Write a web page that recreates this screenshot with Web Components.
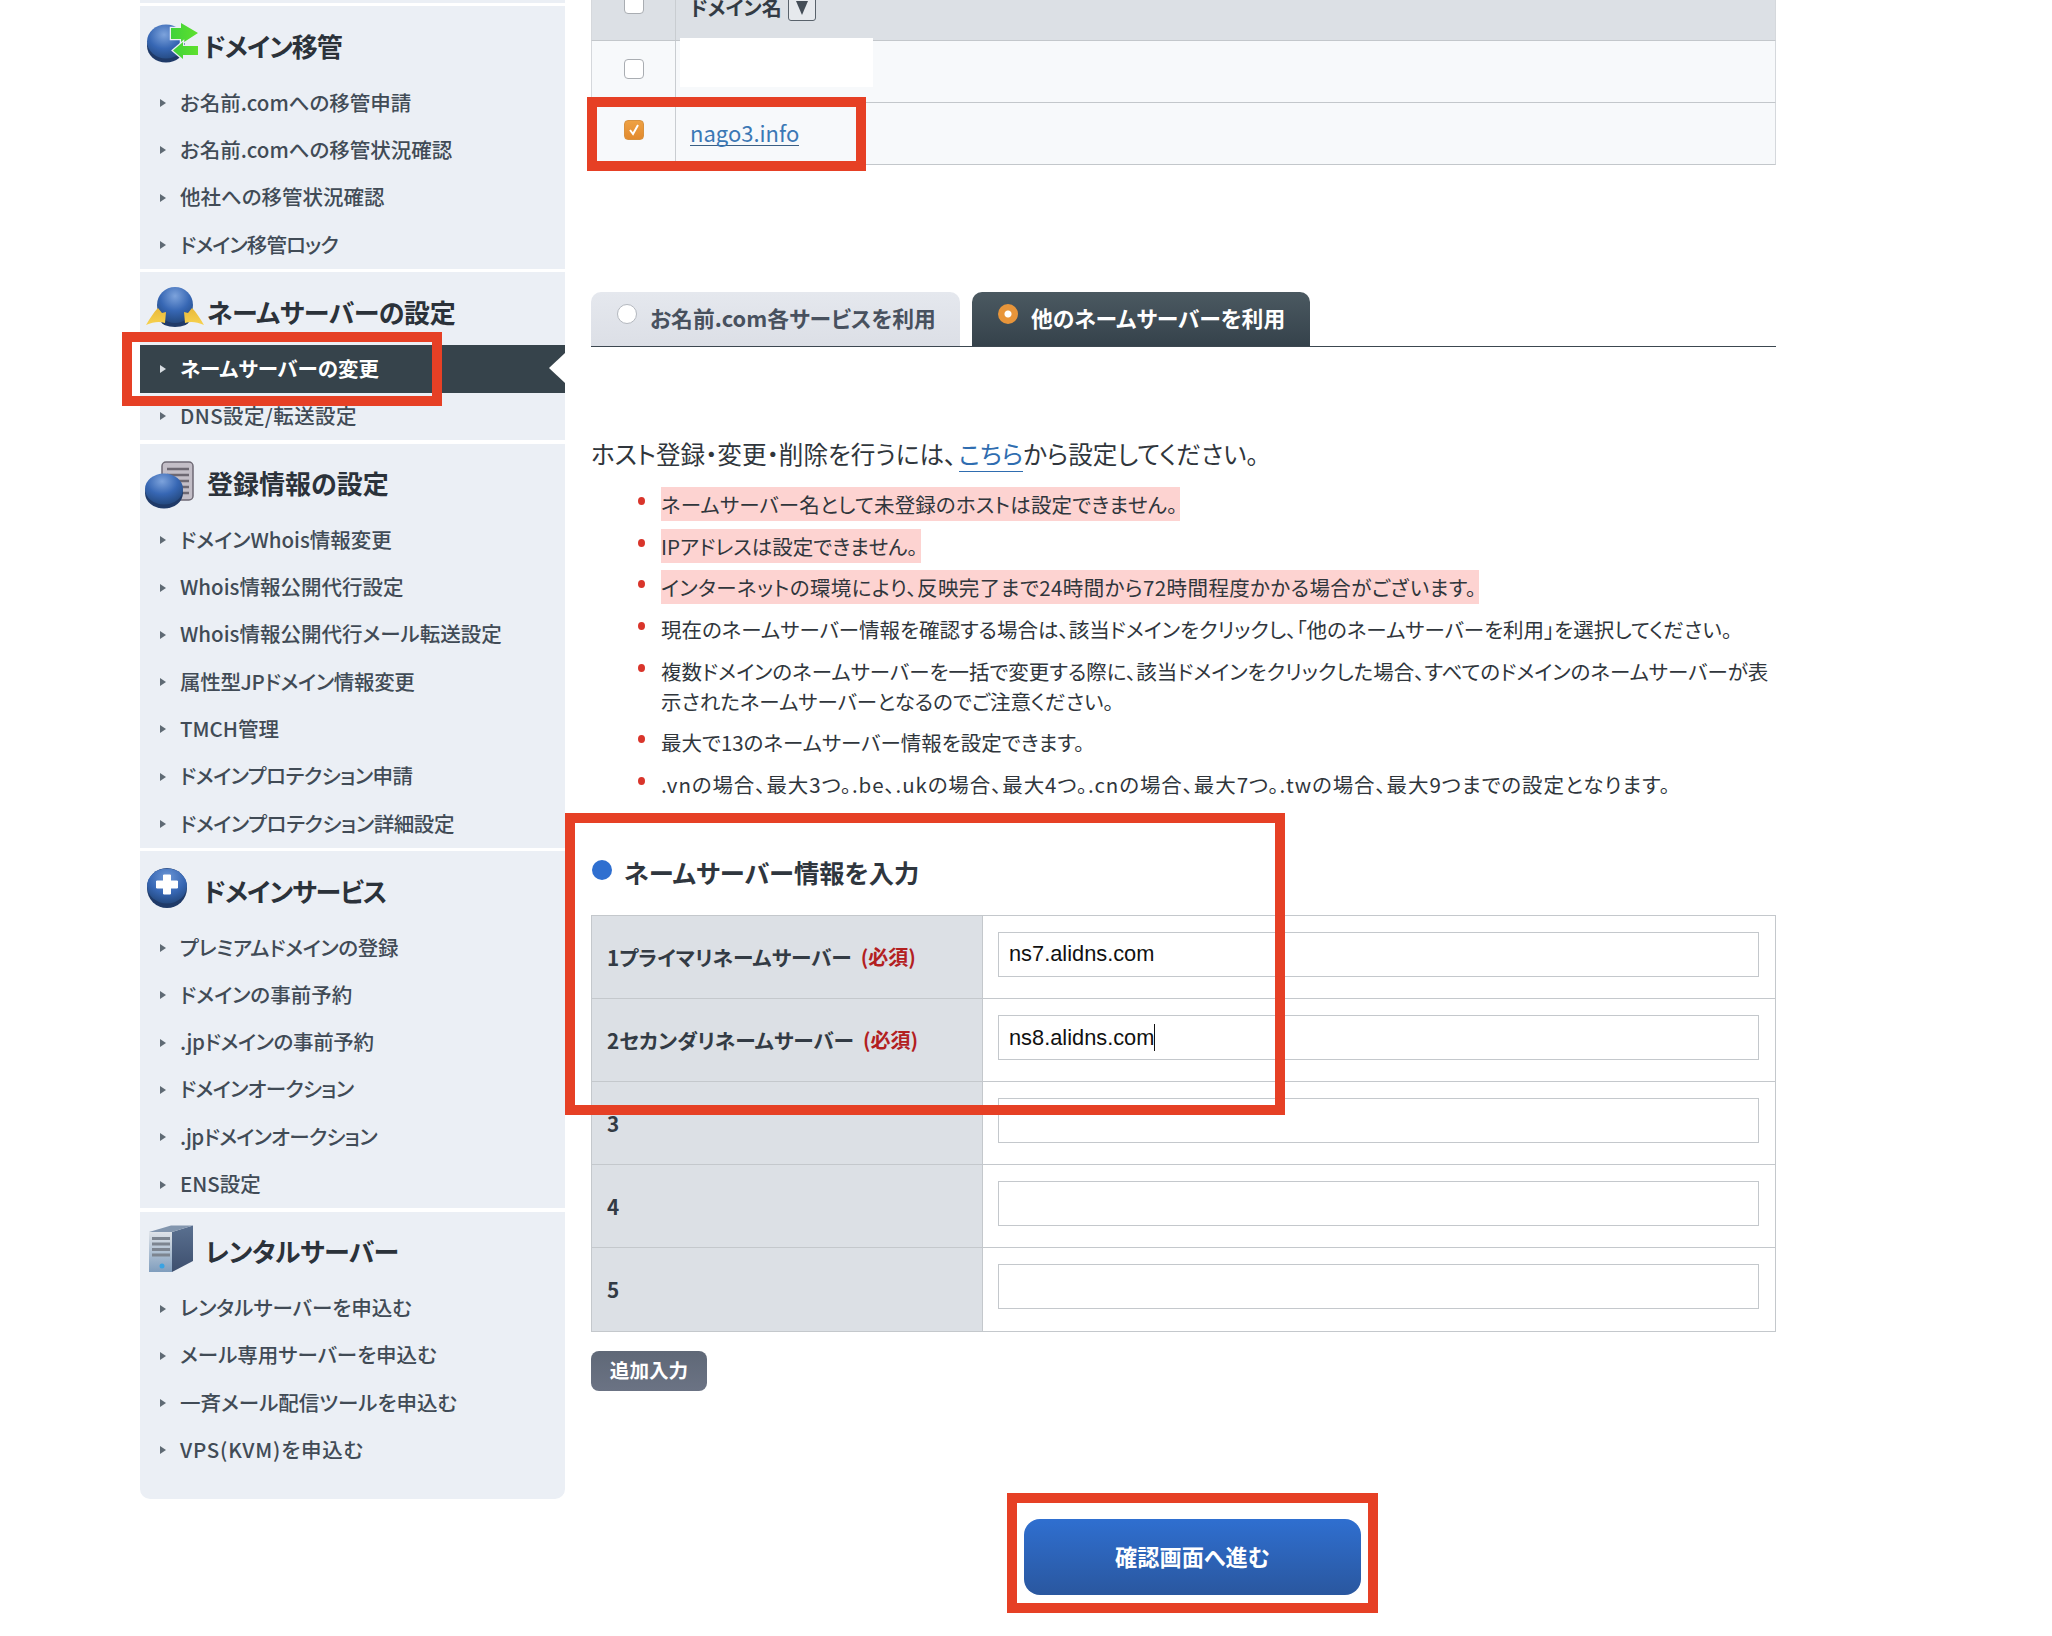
<!DOCTYPE html>
<html lang="ja">
<head>
<meta charset="utf-8">
<title>ネームサーバーの変更</title>
<style>
  html, body { margin: 0; padding: 0; background: #fff; }
  body {
    width: 2052px;
    height: 1636px;
    overflow: hidden;
    position: relative;
    font-family: "Noto Sans CJK JP", "Liberation Sans", sans-serif;
    color: #333;
  }
  svg { overflow: visible; }
</style>
</head>
<body>
<x-page>
  <x-sidebar slot="side">
    <x-nav-section heading="ドメイン移管" style="--tx:-4px;--ls:-1.1px">
      <svg slot="icon" width="62" height="48" viewBox="0 0 62 48">
        <defs>
          <radialGradient id="g1" cx="45%" cy="30%" r="75%"><stop offset="0" stop-color="#7da3dc"/><stop offset=".55" stop-color="#3767b4"/><stop offset="1" stop-color="#24497f"/></radialGradient>
          <linearGradient id="a1" x1="0" y1="0" x2="1" y2="0"><stop offset="0" stop-color="#3fd23a"/><stop offset="1" stop-color="#5fe02e"/></linearGradient>
        </defs>
        <ellipse cx="21" cy="27" rx="19" ry="16.5" fill="#1f3a68"/>
        <ellipse cx="21" cy="22.5" rx="19" ry="17" fill="url(#g1)"/>
        <path d="M26 9h10V4l17 10-17 11v-5H26z" fill="url(#a1)" stroke="#ebeff5" stroke-width="2.5" paint-order="stroke"/>
        <path d="M28 31.5L38 23v4h15v9H38v4z" fill="url(#a1)" stroke="#ebeff5" stroke-width="2.5" paint-order="stroke"/>
      </svg>
      <x-nav-item>お名前.comへの移管申請</x-nav-item>
      <x-nav-item>お名前.comへの移管状況確認</x-nav-item>
      <x-nav-item>他社への移管状況確認</x-nav-item>
      <x-nav-item style="letter-spacing:-.9px">ドメイン移管ロック</x-nav-item>
    </x-nav-section>
    <x-nav-section heading="ネームサーバーの設定" style="--ls:-.4px">
      <svg slot="icon" width="62" height="48" viewBox="0 0 62 48">
        <defs>
          <radialGradient id="g2" cx="50%" cy="25%" r="75%"><stop offset="0" stop-color="#7da3dc"/><stop offset=".55" stop-color="#3767b4"/><stop offset="1" stop-color="#24497f"/></radialGradient>
          <linearGradient id="y2" x1="0" y1="0" x2="0" y2="1"><stop offset="0" stop-color="#e9b93a"/><stop offset="1" stop-color="#f7d24e"/></linearGradient>
        </defs>
        <ellipse cx="30" cy="36" rx="14" ry="6" fill="#1f3a68"/>
        <circle cx="30" cy="20" r="18" fill="url(#g2)"/>
        <path d="M1 40C5 33 9 27 13 23l4 5 4-1-1 11C14 36 8 37 1 40z" fill="url(#y2)"/>
        <path d="M59 40c-4-7-8-13-12-17l-4 5-4-1 1 11c6-2 12-1 19 2z" fill="url(#y2)"/>
      </svg>
      <x-nav-item active>ネームサーバーの変更</x-nav-item>
      <x-nav-item style="letter-spacing:.4px">DNS設定/転送設定</x-nav-item>
    </x-nav-section>
    <x-nav-section heading="登録情報の設定">
      <svg slot="icon" width="62" height="48" viewBox="0 0 62 48">
        <defs>
          <radialGradient id="g3" cx="45%" cy="25%" r="75%"><stop offset="0" stop-color="#7da3dc"/><stop offset=".55" stop-color="#3767b4"/><stop offset="1" stop-color="#24497f"/></radialGradient>
        </defs>
        <rect x="17" y="6" width="31" height="38" rx="4" fill="#c3bec7" stroke="#6f6a75" stroke-width="1.5"/>
        <path d="M22 13h22M22 19h22M22 25h22M22 31h22M22 37h22" stroke="#6d6872" stroke-width="2.5"/>
        <ellipse cx="19" cy="37" rx="19" ry="15.5" fill="#1f3a68"/>
        <ellipse cx="19" cy="33" rx="19" ry="15.5" fill="url(#g3)"/>
      </svg>
      <x-nav-item>ドメインWhois情報変更</x-nav-item>
      <x-nav-item>Whois情報公開代行設定</x-nav-item>
      <x-nav-item>Whois情報公開代行メール転送設定</x-nav-item>
      <x-nav-item style="letter-spacing:-.3px">属性型JPドメイン情報変更</x-nav-item>
      <x-nav-item>TMCH管理</x-nav-item>
      <x-nav-item style="letter-spacing:-.5px">ドメインプロテクション申請</x-nav-item>
      <x-nav-item style="letter-spacing:-.4px">ドメインプロテクション詳細設定</x-nav-item>
    </x-nav-section>
    <x-nav-section heading="ドメインサービス" style="--tx:-4px;--ls:-1px">
      <svg slot="icon" width="62" height="48" viewBox="0 0 62 48">
        <defs>
          <radialGradient id="g4" cx="50%" cy="25%" r="75%"><stop offset="0" stop-color="#6d97d6"/><stop offset=".6" stop-color="#3767b4"/><stop offset="1" stop-color="#24497f"/></radialGradient>
        </defs>
        <circle cx="22" cy="24" r="20" fill="#1f3a68"/>
        <ellipse cx="22" cy="22" rx="20" ry="17.5" fill="url(#g4)"/>
        <path d="M18.5 11h7v6h7v7h-7v6h-7v-6h-7v-7h7z" fill="#fff" stroke="#fff" stroke-linejoin="round"/>
      </svg>
      <x-nav-item style="letter-spacing:-.3px">プレミアムドメインの登録</x-nav-item>
      <x-nav-item>ドメインの事前予約</x-nav-item>
      <x-nav-item style="letter-spacing:-.35px">.jpドメインの事前予約</x-nav-item>
      <x-nav-item style="letter-spacing:-.7px">ドメインオークション</x-nav-item>
      <x-nav-item style="letter-spacing:-.7px">.jpドメインオークション</x-nav-item>
      <x-nav-item>ENS設定</x-nav-item>
    </x-nav-section>
    <x-nav-section heading="レンタルサーバー" last style="--tx:-2px;--ls:-.5px">
      <svg slot="icon" width="62" height="48" viewBox="0 0 62 48">
        <defs>
          <linearGradient id="g5" x1="0" y1="0" x2="0" y2="1"><stop offset="0" stop-color="#dfe3e8"/><stop offset="1" stop-color="#7f9dbd"/></linearGradient>
          <linearGradient id="s5" x1="0" y1="0" x2="0" y2="1"><stop offset="0" stop-color="#5a7090"/><stop offset="1" stop-color="#3d4f6e"/></linearGradient>
        </defs>
        <path d="M27 8l21-6.5V37L27 48z" fill="url(#s5)"/>
        <path d="M4 8h23v40H4z" fill="url(#g5)"/>
        <path d="M4 8l22-6.500h22L27 8z" fill="#8396ae"/>
        <path d="M7 14.500h18M7 20h18M7 25.500h18M7 31h18" stroke="#7d8590" stroke-width="3"/>
        <circle cx="17" cy="42" r="2.500" fill="#39a3e3"/>
      </svg>
      <x-nav-item>レンタルサーバーを申込む</x-nav-item>
      <x-nav-item>メール専用サーバーを申込む</x-nav-item>
      <x-nav-item>一斉メール配信ツールを申込む</x-nav-item>
      <x-nav-item style="letter-spacing:.8px">VPS(KVM)を申込む</x-nav-item>
    </x-nav-section>
  </x-sidebar>

  <x-main slot="main">
    <x-domain-table></x-domain-table>
    <x-tabs></x-tabs>
    <x-notes>
      <li-note hl style="letter-spacing:.14px">ネームサーバー名として未登録のホストは設定できません。</li-note>
      <li-note hl>IPアドレスは設定できません。</li-note>
      <li-note hl style="letter-spacing:.4px">インターネットの環境により、反映完了まで24時間から72時間程度かかる場合がございます。</li-note>
      <li-note>現在のネームサーバー情報を確認する場合は、該当ドメインをクリックし、「他のネームサーバーを利用」を選択してください。</li-note>
      <li-note>複数ドメインのネームサーバーを一括で変更する際に、該当ドメインをクリックした場合、すべてのドメインのネームサーバーが表<br>示されたネームサーバーとなるのでご注意ください。</li-note>
      <li-note>最大で13のネームサーバー情報を設定できます。</li-note>
      <li-note style="letter-spacing:.9px">.vnの場合、最大3つ。.be、.ukの場合、最大4つ。.cnの場合、最大7つ。.twの場合、最大9つまでの設定となります。</li-note>
    </x-notes>
    <x-ns-form></x-ns-form>
    <x-actions></x-actions>
  </x-main>

  <x-callout slot="over" style="left:587px;top:97px;width:279px;height:74px"></x-callout>
  <x-callout slot="over" style="left:122px;top:332px;width:320px;height:74px"></x-callout>
  <x-callout slot="over" style="left:565px;top:813px;width:720px;height:302px"></x-callout>
  <x-callout slot="over" style="left:1007px;top:1493px;width:371px;height:120px"></x-callout>
</x-page>

<script>
const PALT = 'font-feature-settings:"palt";';

function shadow(el, html) {
  el.attachShadow({ mode: "open" });
  el.shadowRoot.innerHTML = html;
}

class XPage extends HTMLElement {
  constructor() {
    super();
    shadow(this, `
      <style>
        :host { display: flex; gap: 26px; padding-left: 140px; align-items: flex-start; }
      </style>
      <slot name="side"></slot>
      <slot name="main"></slot>
      <slot name="over"></slot>
    `);
  }
}
customElements.define("x-page", XPage);

class XSidebar extends HTMLElement {
  constructor() {
    super();
    shadow(this, `
      <style>
        :host { display: flex; flex-direction: column; gap: 3.7px; width: 425px; flex: none; ${PALT} }
        .sliver { height: 2.8px; background: #ebeff5; }
      </style>
      <div class="sliver"></div>
      <slot></slot>
    `);
  }
}
customElements.define("x-sidebar", XSidebar);

class XNavSection extends HTMLElement {
  constructor() {
    super();
    shadow(this, `
      <style>
        :host { display: block; background: #ebeff5; }
        :host([last]) { padding-bottom: 25px; border-radius: 0 0 10px 10px; }
        h2 {
          margin: 0; height: 73px; display: flex; align-items: center; padding-left: 5px;
          font-size: 26px; font-weight: 700; color: #2b323a;
        }
        .icon { width: 62px; height: 48px; flex: none; display: block; }
        .t { position: relative; top: 2.5px; left: var(--tx, 0); letter-spacing: var(--ls, 0); white-space: nowrap; }
      </style>
      <h2><span class="icon"><slot name="icon"></slot></span><span class="t"></span></h2>
      <slot></slot>
    `);
    this.shadowRoot.querySelector(".t").textContent = this.getAttribute("heading");
  }
}
customElements.define("x-nav-section", XNavSection);

class XNavItem extends HTMLElement {
  constructor() {
    super();
    shadow(this, `
      <style>
        :host {
          display: flex; align-items: center; height: 47.3px; position: relative;
          padding-left: 20px; font-size: 20.5px; font-weight: 500; color: #414b56; white-space: nowrap;
        }
        :host([active]) { background: #36434b; color: #fff; font-weight: 700; }
        :host([active])::after {
          content: ""; position: absolute; right: 0; top: 8px;
          border: 15.5px solid transparent; border-left: 0; border-right: 16px solid #fff;
        }
        i {
          width: 0; height: 0; margin-right: 14px; flex: none;
          border-left: 6px solid #5f6a74; border-top: 4px solid transparent; border-bottom: 4px solid transparent;
        }
        :host([active]) i { border-left-color: #d8dde2; }
        span { position: relative; top: -1.5px; }
      </style>
      <i></i><span><slot></slot></span>
    `);
  }
}
customElements.define("x-nav-item", XNavItem);

class XMain extends HTMLElement {
  constructor() {
    super();
    shadow(this, `
      <style>
        :host { display: block; width: 1185px; flex: none; margin-top: -21px; }
      </style>
      <slot></slot>
    `);
  }
}
customElements.define("x-main", XMain);

class XCheck extends HTMLElement {
  constructor() {
    super();
    shadow(this, `
      <style>
        :host {
          display: block; width: 20px; height: 20px; box-sizing: border-box;
          background: #fff; border: 1px solid #a9adb2; border-radius: 4px; position: relative;
        }
        :host([checked]) { background: linear-gradient(#eea143, #e28a2e); border-color: #d8923f; }
        svg { position: absolute; left: 2px; top: 2px; display: none; }
        :host([checked]) svg { display: block; }
      </style>
      <svg width="14" height="14" viewBox="0 0 14 14"><path d="M3 7l3 4 5-9" fill="none" stroke="#fff" stroke-width="2"/></svg>
    `);
  }
}
customElements.define("x-check", XCheck);

class XDomainTable extends HTMLElement {
  constructor() {
    super();
    shadow(this, `
      <style>
        :host { display: block; position: relative; font-size: 20px; ${PALT} }
        .row {
          display: grid; grid-template-columns: 84px 1fr; height: 62px; box-sizing: border-box;
          background: #f7f9fb; border-bottom: 1px solid #c3c7cb; border-left: 1px solid #d5d8dc; border-right: 1px solid #d5d8dc;
        }
        .head { background: #dce0e5; }
        .c { display: flex; align-items: center; }
        .c1 { justify-content: center; border-right: 1px solid #c9cdd1; }
        .c2 { padding-left: 14px; }
        .head .c { padding-bottom: 4px; }
        .head .c1 { padding-bottom: 12px; }
        .r2 .c1 { padding-bottom: 5px; }
        .r3 .c1 { padding-bottom: 7px; }
        b { font-weight: 700; color: #333b44; font-size: 20px; }
        .sort {
          margin-left: 6px; width: 28px; height: 26px; box-sizing: border-box; display: flex; align-items: center; justify-content: center;
          border: 1px solid #59626b; border-radius: 3px; background: #e6e9ed;
        }
        .sort::before { content: ""; border-top: 14px solid #444d57; border-left: 6px solid transparent; border-right: 6px solid transparent; }
        a { font-size: 22px; color: #3b78b5; text-decoration: none; border-bottom: 1px solid #3a5f85; line-height: 26px; position: relative; top: -1px; }
        .mask { position: absolute; left: 89px; top: 59px; width: 193px; height: 49px; background: #fff; }
      </style>
      <div class="row head"><div class="c c1"><x-check></x-check></div><div class="c c2"><b>ドメイン名</b><span class="sort"></span></div></div>
      <div class="row r2"><div class="c c1"><x-check></x-check></div><div class="c c2"></div></div>
      <div class="row r3"><div class="c c1"><x-check checked></x-check></div><div class="c c2"><a>nago3.info</a></div></div>
      <div class="mask"></div>
    `);
  }
}
customElements.define("x-domain-table", XDomainTable);

class XTabs extends HTMLElement {
  constructor() {
    super();
    shadow(this, `
      <style>
        :host { display: flex; gap: 12px; margin-top: 127px; height: 54px; border-bottom: 1.5px solid #3c4750; font-size: 21.8px; font-weight: 700; ${PALT} }
        .tab {
          display: flex; align-items: center; box-sizing: border-box; height: 54px; padding-bottom: 4px; border-radius: 10px 10px 0 0; white-space: nowrap;
        }
        .off { width: 369px; padding-left: 26px; background: linear-gradient(#e5e8ee, #dcdfe6); color: #48515e; }
        .on { width: 338px; padding-left: 26px; background: linear-gradient(#4b5961, #35424b); color: #fff; }
        i { width: 20px; height: 20px; border-radius: 50%; box-sizing: border-box; flex: none; margin: -7px 13px 0 0; }
        .off i { background: #fff; border: 1px solid #b4b8bf; }
        .on i { background: radial-gradient(circle, #fff 0 3px, #e8953a 4px); }
      </style>
      <div class="tab off"><i></i><span>お名前.com各サービスを利用</span></div>
      <div class="tab on"><i></i><span>他のネームサーバーを利用</span></div>
    `);
  }
}
customElements.define("x-tabs", XTabs);

class XNotes extends HTMLElement {
  constructor() {
    super();
    shadow(this, `
      <style>
        :host { display: block; ${PALT} }
        p { margin: 89px 0 0; height: 34px; line-height: 34px; font-size: 24.6px; color: #30363c; white-space: nowrap; }
        a { color: #2f6db0; text-decoration: none; border-bottom: 1px solid #2f6db0; margin-left: 2.5px; }
        .list { display: flex; flex-direction: column; gap: 11.7px; margin-top: 19px; padding-left: 70px; }
      </style>
      <p>ホスト登録・変更・削除を行うには、<a>こちら</a>から設定してください。</p>
      <div class="list"><slot></slot></div>
    `);
  }
}
customElements.define("x-notes", XNotes);

class LiNote extends HTMLElement {
  constructor() {
    super();
    shadow(this, `
      <style>
        :host { display: block; position: relative; font-size: 20.5px; line-height: 30px; color: #30363c; white-space: nowrap; }
        :host::before {
          content: ""; position: absolute; left: -23px; top: 8px; width: 7px; height: 8px; border-radius: 50%; background: #d9352b;
        }
        :host([hl]) span { background: #fdd3d1; padding: 2px 3px 2px 0; }
      </style>
      <span><slot></slot></span>
    `);
  }
}
customElements.define("li-note", LiNote);

class XNsRow extends HTMLElement {
  constructor() {
    super();
    const req = this.hasAttribute("required");
    const val = this.getAttribute("value") || "";
    const caret = this.hasAttribute("caret");
    shadow(this, `
      <style>
        :host { display: grid; grid-template-columns: 391px 1fr; height: 83.2px; box-sizing: border-box; border-bottom: 1px solid #c4c8cc; }
        .l {
          display: flex; align-items: center; padding: 0 0 0 15px; background: #dce0e5; border-right: 1px solid #c4c8cc;
          font-size: 20.7px; font-weight: 700; color: #333b44; white-space: nowrap;
        }
        .l em { font-style: normal; font-size: 20px; color: #b3201f; margin-left: 9px; }
        .f { display: flex; align-items: center; padding: 0 16px 5px 15px; }
        .box {
          width: 100%; height: 45px; box-sizing: border-box; border: 1px solid #c4c8cc; background: #fff;
          padding-left: 10px; display: flex; align-items: center;
          font-family: "Liberation Sans", sans-serif; font-size: 21.8px; color: #111;
        }
        .caret { border-right: 1px solid #111; height: 27px; line-height: 27px; }
      </style>
      <div class="l"><span>${this.getAttribute("label")}</span>${req ? "<em>(必須)</em>" : ""}</div>
      <div class="f"><div class="box" role="textbox"><span class="${caret ? "caret" : ""}">${val}</span></div></div>
    `);
  }
}
customElements.define("x-ns-row", XNsRow);

class XNsForm extends HTMLElement {
  constructor() {
    super();
    shadow(this, `
      <style>
        :host { display: block; ${PALT} }
        h3 {
          margin: 53.5px 0 22px; height: 40px; display: flex; align-items: center; gap: 12px;
          font-size: 25.3px; font-weight: 700; color: #2f363e;
        }
        h3 span { position: relative; top: -1px; }
        h3::before { content: ""; width: 20px; height: 20px; border-radius: 50%; background: #2f6fd0; margin: -6px 0 0 1px; }
        .t { border: 1px solid #c4c8cc; border-bottom: 0; }
      </style>
      <h3><span>ネームサーバー情報を入力</span></h3>
      <div class="t">
        <x-ns-row label="1プライマリネームサーバー" required value="ns7.alidns.com"></x-ns-row>
        <x-ns-row label="2セカンダリネームサーバー" required value="ns8.alidns.com" caret></x-ns-row>
        <x-ns-row label="3"></x-ns-row>
        <x-ns-row label="4"></x-ns-row>
        <x-ns-row label="5"></x-ns-row>
      </div>
    `);
  }
}
customElements.define("x-ns-form", XNsForm);

class XActions extends HTMLElement {
  constructor() {
    super();
    shadow(this, `
      <style>
        :host { display: block; ${PALT} font-weight: 700; color: #fff; }
        div { display: flex; align-items: center; justify-content: center; white-space: nowrap; box-sizing: border-box; padding-bottom: 2px; }
        .add {
          margin-top: 19px; width: 116px; height: 40px; border-radius: 8px; font-size: 19.6px;
          background: linear-gradient(#5f6877, #6b7384);
        }
        .go {
          margin: 128px 0 0 433px; width: 337px; height: 76px; border-radius: 16px; font-size: 22.2px;
          background: linear-gradient(#2f6fd0, #2a579f);
        }
      </style>
      <div class="add">追加入力</div>
      <div class="go">確認画面へ進む</div>
    `);
  }
}
customElements.define("x-actions", XActions);

class XCallout extends HTMLElement {
  constructor() {
    super();
    shadow(this, `
      <style>
        :host { display: block; position: absolute; box-sizing: border-box; border: 10px solid #e64025; pointer-events: none; }
      </style>
    `);
  }
}
customElements.define("x-callout", XCallout);
</script>
</body>
</html>
